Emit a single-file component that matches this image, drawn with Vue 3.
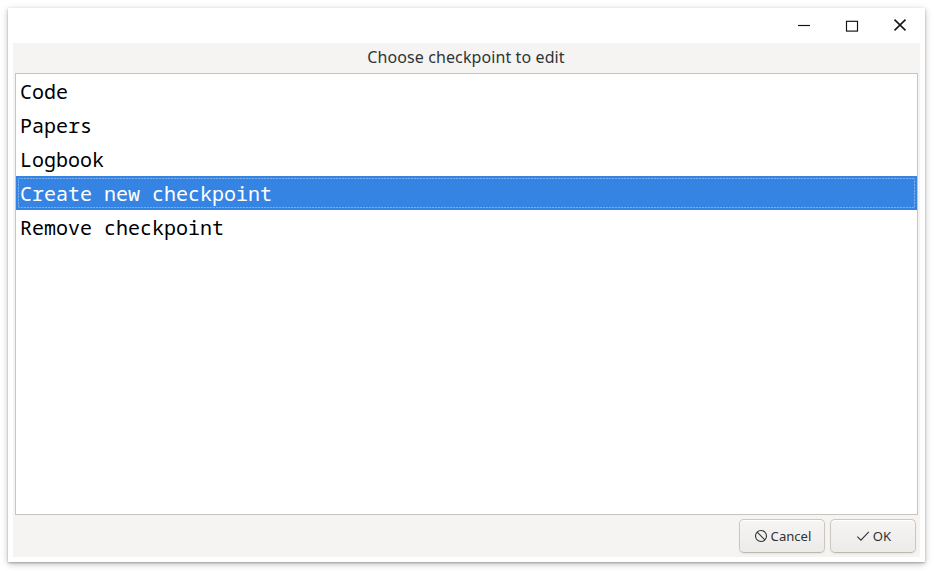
<script setup>
import { ref } from 'vue'

const items = ['Code', 'Papers', 'Logbook', 'Create new checkpoint', 'Remove checkpoint']
const selected = ref(3)
</script>

<template>
  <div class="desktop">
    <section class="window">
      <header class="titlebar">
        <button class="control" aria-label="Minimize">
          <svg viewBox="0 0 16 16"><path d="M2 8.5H14" /></svg>
        </button>
        <button class="control" aria-label="Maximize">
          <svg viewBox="0 0 16 16"><rect x="2.5" y="4.3" width="11" height="9.8" /></svg>
        </button>
        <button class="control close" aria-label="Close">
          <svg viewBox="0 0 16 16"><path d="M2.5 2.7L13.5 13.3M13.5 2.7L2.5 13.3" /></svg>
        </button>
      </header>
      <main class="content">
        <p class="prompt">Choose checkpoint to edit</p>
        <ul class="list">
          <li
            v-for="(item, i) in items"
            :key="item"
            class="row"
            :class="{ selected: i === selected }"
            @click="selected = i"
          >{{ item }}</li>
        </ul>
        <footer class="actions">
          <button class="action">
            <svg viewBox="0 0 16 16"><circle cx="8" cy="8" r="5.5" /><path d="M4.2 4.2L11.8 11.8" /></svg>
            <span>Cancel</span>
          </button>
          <button class="action ok">
            <svg viewBox="0 0 16 16"><path d="M2.3 8.7L5.9 12.1L13.8 3.8" /></svg>
            <span>OK</span>
          </button>
        </footer>
      </main>
    </section>
  </div>
</template>

<style>
body {
  background: #fff;
}
</style>

<style scoped>
.desktop {
  box-sizing: border-box;
  width: 934px;
  height: 571px;
  padding: 8px 9px 9px 8px;
  overflow: hidden;
  font-family: "Noto Sans", sans-serif;
}
.window {
  box-sizing: border-box;
  height: 554px;
  padding: 0 5px 5px;
  display: flex;
  flex-direction: column;
  background: #fff;
  box-shadow: 0 1px 2px rgba(0, 0, 0, 0.26), 0 2px 7px rgba(0, 0, 0, 0.24);
}
.titlebar {
  box-sizing: border-box;
  height: 35px;
  display: flex;
  justify-content: flex-end;
  align-items: flex-start;
  gap: 32px;
  padding: 9px 12px 0 0;
}
.control {
  width: 16px;
  height: 16px;
  padding: 0;
  border: 0;
  background: none;
}
.control svg {
  display: block;
  width: 16px;
  height: 16px;
  fill: none;
  stroke: #111;
  stroke-width: 1.15;
}
.control.close svg {
  stroke: #15151a;
  stroke-width: 1.6;
}
.content {
  flex: 1;
  display: flex;
  flex-direction: column;
  padding: 0 2px;
  background: #f5f4f3;
}
.prompt {
  height: 30px;
  margin: 0;
  line-height: 29px;
  text-align: center;
  font-size: 16px;
  letter-spacing: 0.1px;
  text-indent: -1px;
  color: #2e3436;
}
.list {
  box-sizing: border-box;
  height: 442px;
  margin: 0;
  padding: 0;
  border: 1px solid #c9c4bf;
  background: #fff;
  list-style: none;
}
.row {
  height: 34px;
  padding-left: 4px;
  line-height: 35px;
  font-family: "Noto Sans Mono", "DejaVu Sans Mono", monospace;
  font-size: 20px;
  color: #000;
}
.row.selected {
  position: relative;
  background: #3584e4;
  color: #fff;
}
.row.selected::after {
  content: "";
  position: absolute;
  inset: 2px;
  --dash: rgba(255, 255, 255, 0.34) 0 2px, rgba(255, 255, 255, 0.08) 2px 3px;
  background:
    repeating-linear-gradient(90deg, var(--dash)) 0 0 / 100% 1px no-repeat,
    repeating-linear-gradient(90deg, var(--dash)) 0 100% / 100% 1px no-repeat,
    repeating-linear-gradient(var(--dash)) 0 0 / 1px 100% no-repeat,
    repeating-linear-gradient(var(--dash)) 100% 0 / 1px 100% no-repeat;
  border-radius: 2px;
}
.actions {
  display: flex;
  justify-content: flex-end;
  gap: 5px;
  padding: 4px 2px 0 0;
}
.action {
  box-sizing: border-box;
  width: 86px;
  height: 34px;
  padding: 0;
  display: flex;
  align-items: center;
  justify-content: center;
  border: 1px solid #cdc7c2;
  border-bottom-color: #bfb8b1;
  border-radius: 5px;
  background: linear-gradient(#f6f5f4, #edebe9);
  box-shadow: inset 0 1px #fff, 0 1px 2px rgba(0, 0, 0, 0.07);
  font-family: inherit;
  font-size: 13.1px;
  color: #2e3436;
}
.action svg {
  width: 16px;
  height: 16px;
  margin-right: 2px;
  fill: none;
  stroke: #2e3436;
  stroke-width: 1.1;
}
</style>
